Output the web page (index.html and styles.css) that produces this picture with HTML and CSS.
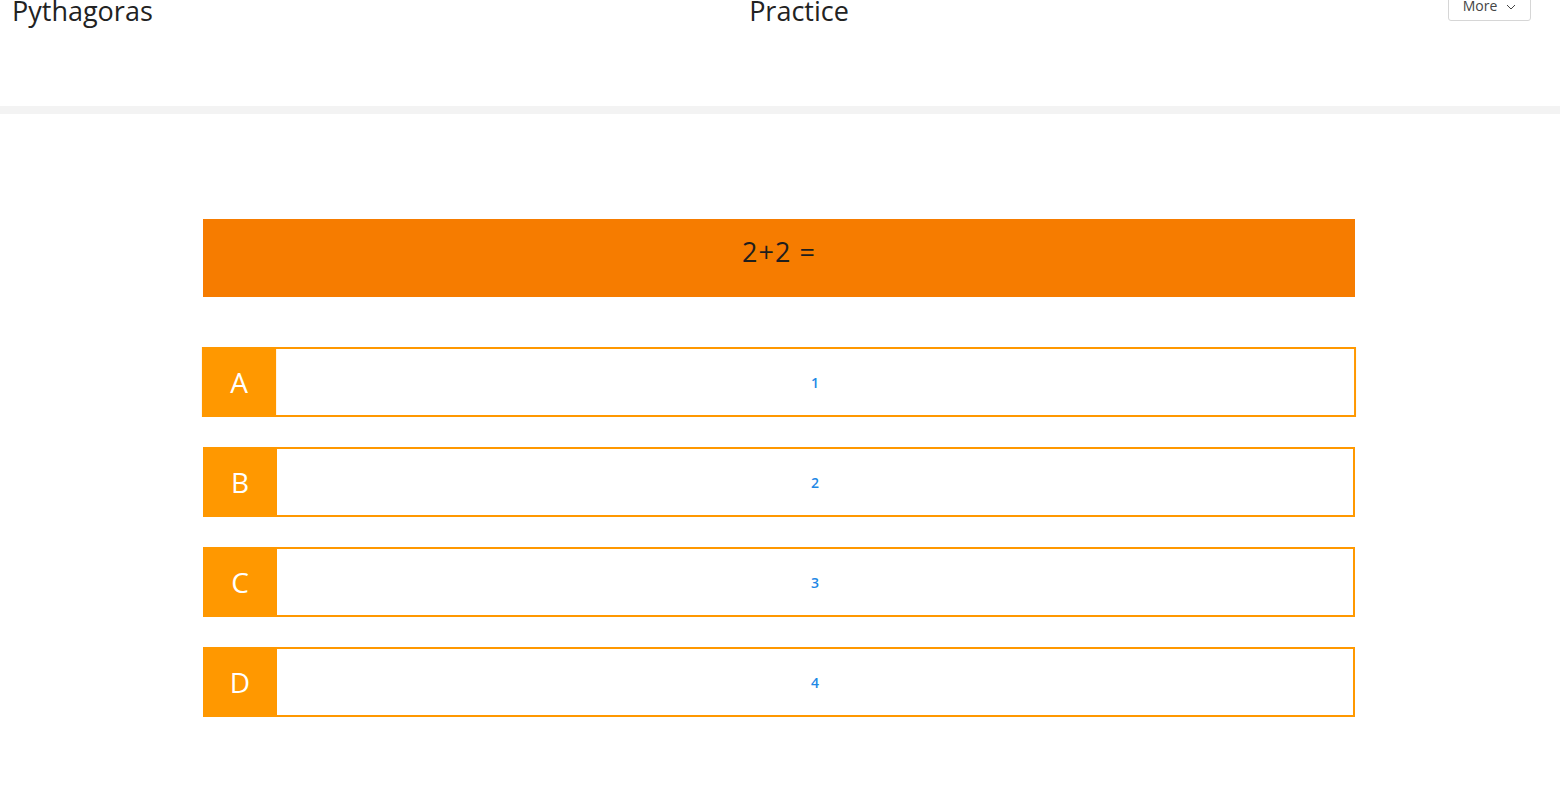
FILE: index.html
```html
<!DOCTYPE html>
<html lang="en">
<head>
<meta charset="utf-8">
<title>Pythagoras - Practice</title>
<link rel="stylesheet" href="styles.css">
</head>
<body>
<header class="topbar">
  <div class="brand">Pythagoras</div>
  <div class="page-title">Practice</div>
  <div class="actions">
    <button class="more-btn">More
      <svg class="chev" width="10" height="6" viewBox="0 0 10 6"><path d="M1 1l4 4 4-4" fill="none" stroke="#444" stroke-width="1"/></svg>
    </button>
  </div>
</header>
<div class="divider"></div>
<main class="quiz">
  <div class="question">2+2 =</div>
  <ul class="options">
    <li class="option hovered"><span class="letter">A</span><span class="answer">1</span></li>
    <li class="option"><span class="letter">B</span><span class="answer">2</span></li>
    <li class="option"><span class="letter">C</span><span class="answer">3</span></li>
    <li class="option"><span class="letter">D</span><span class="answer">4</span></li>
  </ul>
</main>
</body>
</html>
```

FILE: styles.css
```css
* { box-sizing: border-box; }
html, body { margin: 0; padding: 0; background: #fff; }
body {
  font-family: "Open Sans", "Noto Sans", "Liberation Sans", sans-serif;
  color: #222;
  overflow: hidden;
}
.topbar {
  display: grid;
  grid-template-columns: 1fr auto 1fr;
  align-items: start;
  padding: 0 29px 0 12px;
  margin-top: -9px;
  height: 115px;
}
.brand {
  font-size: 27px;
  line-height: 40px;
  color: #222;
}
.page-title {
  font-size: 27px;
  line-height: 40px;
  color: #222;
  margin-left: 55px;
}
.actions {
  display: flex;
  justify-content: flex-end;
}
.more-btn {
  height: 30px;
  width: 83px;
  border: 1px solid #d6d6d6;
  border-radius: 3px;
  background: #fff;
  font-family: inherit;
  font-size: 14px;
  color: #444;
  display: flex;
  align-items: flex-end;
  justify-content: center;
  gap: 9px;
  padding: 0 0 5px 0;
}
.chev { margin-bottom: 5px; }
.divider {
  height: 8px;
  background: #f3f3f3;
}
.quiz {
  width: 1152px;
  margin: 105px 0 0 203px;
}
.question {
  height: 78px;
  background: #f67c00;
  display: flex;
  align-items: center;
  justify-content: center;
  font-size: 27px;
  letter-spacing: 1px;
  color: #1e1e1e;
  padding-bottom: 13px;
}
.options {
  list-style: none;
  margin: 50px 0 0 0;
  padding: 0;
  display: flex;
  flex-direction: column;
  gap: 30px;
}
.option {
  height: 70px;
  border: 2px solid #ff9800;
  display: flex;
  align-items: stretch;
}
.option.hovered { transform: scaleX(1.0018); }
.letter {
  width: 74px;
  background: #ff9800;
  color: #fff;
  font-size: 28px;
  display: flex;
  align-items: center;
  justify-content: center;
  margin: -2px 0 -2px -2px;
}
.answer {
  flex: 1;
  display: flex;
  align-items: center;
  justify-content: center;
  font-size: 14px;
  font-weight: 600;
  color: #1e88e5;
}
```
